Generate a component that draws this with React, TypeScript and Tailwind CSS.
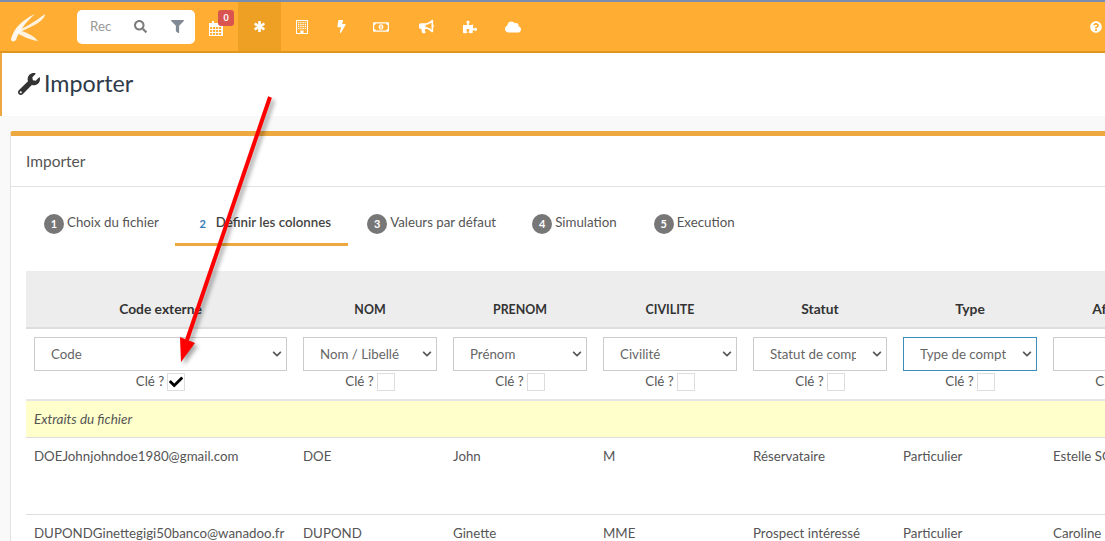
import {
  FaAsterisk,
  FaBolt,
  FaBullhorn,
  FaCheck,
  FaChevronDown,
  FaCloud,
  FaFilter,
  FaPuzzlePiece,
  FaQuestionCircle,
  FaRegMoneyBillAlt,
  FaSearch,
  FaWrench,
} from "react-icons/fa";

const columns = [
  { title: "Code externe", value: "Code", w: "w-[269px] text-[13.8px]" },
  { title: "NOM", value: "Nom / Libellé", w: "w-[150px] text-[12.4px]" },
  { title: "PRENOM", value: "Prénom", w: "w-[150px] text-[12.4px]" },
  { title: "CIVILITE", value: "Civilité", w: "w-[150px] text-[12.4px]" },
  { title: "Statut", value: "Statut de compte", w: "w-[150px] text-[13.8px]" },
  { title: "Type", value: "Type de compte", w: "w-[150px] text-[13.8px]" },
  { title: "Affecté à", value: "", w: "w-[150px] text-[13.8px]" },
];

const rows = [
  ["DOEJohnjohndoe1980@gmail.com", "DOE", "John", "M", "Réservataire", "Particulier", "Estelle SOLER"],
  ["DUPONDGinettegigi50banco@wanadoo.fr", "DUPOND", "Ginette", "MME", "Prospect intéressé", "Particulier", "Caroline MARTIN"],
];

const tabs = [
  { n: "1", label: "Choix du fichier", cls: "pl-[18px] pr-[18px] border-transparent text-[#555]" },
  { n: "2", label: "Définir les colonnes", active: true, cls: "-ml-[2px] pl-[18px] pr-[17px] border-[#eda93f] font-semibold text-[#444]" },
  { n: "3", label: "Valeurs par défaut", cls: "ml-[1px] pl-[18px] pr-[18px] border-transparent text-[#555]" },
  { n: "4", label: "Simulation", cls: "pl-[18px] pr-[18px] border-transparent text-[#555]" },
  { n: "5", label: "Execution", cls: "ml-[1px] pl-[18px] pr-[18px] border-transparent text-[#555]" },
];

const Logo = () => (
  <svg width="38" height="30" viewBox="0 0 38 30" className="ml-[10px]">
    <path d="M1 27 C4 16 12 8 25 2 C16 10 9 19 6 28 C4 30 1 30 1 27Z" fill="#fff" opacity="0.9" />
    <path d="M5 20 C14 16 26 9 35 2 C35 8 24 14 12 19 C18 21 24 24 28 29 C20 28 12 24 5 20Z" fill="#fff" opacity="0.85" />
  </svg>
);

const CalendarIcon = () => (
  <svg width="14" height="15" viewBox="0 0 14 15" className="mt-[3px]">
    <rect x="0" y="2" width="14" height="13" fill="#fff" />
    <rect x="3" y="0" width="2" height="3" fill="#fff" />
    <rect x="9" y="0" width="2" height="3" fill="#fff" />
    {[1, 4, 7, 10].map((x) =>
      [6, 9, 12].map((y) => <rect key={`${x}-${y}`} x={x} y={y} width="2.2" height="2" fill="#ffad33" />),
    )}
  </svg>
);

const BuildingIcon = () => (
  <svg width="12" height="14" viewBox="0 0 12 14">
    <rect x="0.5" y="0.5" width="11" height="13" fill="none" stroke="#fff" />
    {[2, 4.25, 6.5, 8.75].map((x) =>
      [2, 4, 6, 8].map((y) => <rect key={`${x}-${y}`} x={x} y={y} width="1.3" height="1.2" fill="#fff" />),
    )}
    <rect x="4.5" y="10.5" width="3" height="3" fill="#fff" />
  </svg>
);

const NavIcon = ({ children, className }: { children: React.ReactNode; className: string }) => (
  <div className={`h-[49px] flex items-center justify-center text-white ${className}`}>{children}</div>
);

export default function App() {
  return (
    <div className="relative w-[1105px] h-[541px] overflow-hidden bg-[#f9f9f9] text-[#4b5563] font-['Source_Sans_Pro','Lato',sans-serif] text-[13.3px]">
      <header className="h-[53px] border-t-2 border-t-[#7a8fb0] border-b-2 border-b-[#e0951f] bg-[#ffad33] flex items-center">
        <Logo />
        <div className="ml-[29px] w-[118px] h-[34px] bg-white rounded-[5px] flex items-center pl-[13px] text-[#999]">
          <span className="w-[31px] overflow-hidden">Rec</span>
          <FaSearch className="ml-[13px] text-[13px] text-[#7d7d7d]" />
          <FaFilter className="ml-[24px] text-[13px] text-[#7f8a94]" />
        </div>
        <div className="flex items-center">
          <div className="relative">
            <NavIcon className="w-[43px] pr-[1px]">
              <CalendarIcon />
            </NavIcon>
            <span className="absolute left-[23px] top-[8px] w-[16px] h-[16px] rounded-[3px] bg-[#d9534f] text-white text-[9px] font-bold flex items-center justify-center">
              0
            </span>
          </div>
          <NavIcon className="w-[43px] bg-[#eea024]">
            <FaAsterisk className="text-[11px] stroke-white stroke-[40]" />
          </NavIcon>
          <NavIcon className="w-[42px]">
            <BuildingIcon />
          </NavIcon>
          <NavIcon className="w-[36px]">
            <FaBolt className="text-[13px]" />
          </NavIcon>
          <NavIcon className="w-[44px]">
            <FaRegMoneyBillAlt className="text-[16px]" />
          </NavIcon>
          <NavIcon className="w-[46px]">
            <FaBullhorn className="text-[15px]" />
          </NavIcon>
          <NavIcon className="w-[42px]">
            <FaPuzzlePiece className="text-[14px]" />
          </NavIcon>
          <NavIcon className="w-[44px]">
            <FaCloud className="text-[16px]" />
          </NavIcon>
        </div>
        <FaQuestionCircle className="ml-auto mr-[3px] text-white text-[12px]" />
      </header>

      <div className="h-[63px] bg-white border-l-2 border-l-[#eda93f] flex items-center pl-[16px] pb-[1px] text-[#2f3b4a]">
        <FaWrench className="text-[#333] text-[22px]" />
        <h1 className="ml-[4px] text-[23.3px] leading-none">Importer</h1>
      </div>

      <section className="mt-[15px] ml-[10px] w-[1300px] h-[500px] bg-white border-l border-[#e2e2e2] border-t-[5px] border-t-[#eda93f] rounded-t-[3px]">
        <div className="h-[51px] border-b border-[#e2e2e2] pl-[15px] pt-[2px] flex items-center text-[15.5px] text-[#555]">Importer</div>

        <nav className="mt-[15px] ml-[15px] flex h-[44px]">
          {tabs.map((t) => (
            <div key={t.n} className={`flex items-center h-[44px] border-b-[3px] ${t.cls}`}>
              {t.active ? (
                <span className="w-[20px] text-center text-[#337ab7] text-[11px] font-bold mt-[3px]">{t.n}</span>
              ) : (
                <span className="w-[20px] h-[20px] rounded-full bg-[#777] text-white text-[11px] font-bold flex items-center justify-center mt-[3px]">{t.n}</span>
              )}
              <span className="ml-[3px]">{t.label}</span>
            </div>
          ))}
        </nav>

        <table className="mt-[25px] ml-[15px] table-fixed border-collapse w-[1169px]">
          <thead>
            <tr className="h-[57px] bg-[#ededed] border-b-[2px] border-[#ddd]">
              {columns.map((c) => (
                <th key={c.title} className={`${c.w} align-bottom pb-[7px] font-bold text-[#333] text-center`}>
                  {c.title}
                </th>
              ))}
            </tr>
            <tr className="h-[72px] border-b-[2px] border-[#e6e6e6]">
              {columns.map((c) => (
                <td key={c.title} className="px-[8px] align-top pt-[8px]">
                  <div
                    className={`relative h-[34px] border flex items-center pl-[16px] pt-[1px] whitespace-nowrap overflow-hidden text-[#666] ${c.title === "Type" ? "border-[#3c8dbc]" : "border-[#ccc]"}`}
                  >
                    <span className="w-full overflow-hidden">{c.value}</span>
                    <span className="absolute right-0 top-0 h-full w-[30px] bg-white flex items-center justify-end pr-[4px]">
                      <FaChevronDown className="text-[10px] text-[#555]" />
                    </span>
                  </div>
                  <div className="mt-[1px] flex items-center justify-center gap-[3px] text-[#555]">
                    <span>Clé ?</span>
                    <span className="w-[18px] h-[18px] border border-[#ddd] flex items-center justify-center text-black text-[14px]">
                      {c.title === "Code externe" && <FaCheck />}
                    </span>
                  </div>
                </td>
              ))}
            </tr>
          </thead>
          <tbody>
            <tr className="h-[37px] bg-[#ffffcc] border-b border-[#ddd]">
              <td colSpan={7} className="pl-[8px] italic text-[13.5px] text-[#555]">
                Extraits du fichier
              </td>
            </tr>
            {rows.map((r) => (
              <tr key={r[0]} className="h-[77px] border-b border-[#ddd]">
                {r.map((cell, i) => (
                  <td key={i} className="px-[8px] pt-[9px] align-top whitespace-nowrap overflow-hidden text-[#555]">
                    {cell}
                  </td>
                ))}
              </tr>
            ))}
          </tbody>
        </table>
      </section>

      <svg className="absolute left-0 top-0 pointer-events-none" width="1105" height="541">
        <g className="drop-shadow-[3px_3px_2px_rgba(0,0,0,0.35)]">
          <line x1="270" y1="97" x2="187" y2="340" stroke="#ff0000" strokeWidth="4" />
          <polygon points="181,362 180,337 195,343" fill="#ff0000" />
        </g>
      </svg>
    </div>
  );
}
